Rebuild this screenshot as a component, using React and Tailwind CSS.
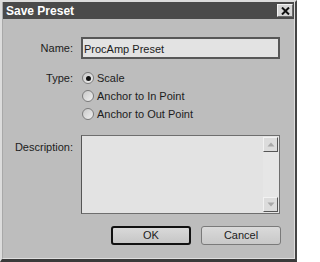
import React from "react";

function Radio({ checked }) {
  return (
    <span className="relative flex h-[12px] w-[12px] shrink-0 items-center justify-center rounded-full border border-[#7a7a7a] bg-gradient-to-br from-[#c8c8c8] to-[#f0f0f0]">
      {checked && <span className="h-[5px] w-[5px] rounded-full bg-[#111]" />}
    </span>
  );
}

function ScrollBtn({ up }) {
  return (
    <div className="flex h-[15px] w-full items-center justify-center border-r border-b border-[#555] border-t border-l border-t-[#f2f2f2] border-l-[#f2f2f2] bg-[#dcdcdc]">
      <svg width="8" height="5" viewBox="0 0 8 5">
        {up ? (
          <polygon points="4,0.5 7.5,4.5 0.5,4.5" fill="#a8a8a8" />
        ) : (
          <polygon points="0.5,0.5 7.5,0.5 4,4.5" fill="#a8a8a8" />
        )}
      </svg>
    </div>
  );
}

export default function App() {
  const font = { fontFamily: '"Liberation Sans", Arial, sans-serif' };
  return (
    <div
      className="h-[262px] w-[297px] border-l-[2px] border-t-[2px] border-r-[2px] border-b-[3px] border-l-[#dcdcdc] border-t-[#dcdcdc] border-r-[#454545] border-b-[#3a3a3a] bg-[#bdbdbd] text-[#1c1c1c]"
      style={font}
    >
      <div className="flex h-full flex-col border-r border-b border-r-[#dedede] border-b-[#dedede] border-l border-l-[#a8a8a8]">
        {/* Title bar */}
        <div className="flex h-[17px] shrink-0 items-center justify-between bg-[#4a4a4a] pl-[3px] pr-[1px]">
          <span className="text-[12px] font-bold leading-none text-white">Save Preset</span>
          <div className="flex h-[13px] w-[16px] items-center justify-center border border-t-[#f4f4f4] border-l-[#f4f4f4] border-r-[#6a6a6a] border-b-[#6a6a6a] bg-[#d6d6d6]">
            <svg width="9" height="8" viewBox="0 0 9 8">
              <path d="M1 0.5 L8 7.5 M8 0.5 L1 7.5" stroke="#111" strokeWidth="2" />
            </svg>
          </div>
        </div>

        {/* Body */}
        <div className="flex flex-1 flex-col pt-[18px] text-[11px]">
          {/* Name */}
          <div className="flex items-center">
            <span className="w-[70px] pr-0 text-right">Name:</span>
            <div className="ml-[8px] flex h-[22px] w-[199px] items-start border-2 border-[#575757] bg-[#e3e3e3] pl-[1px] pt-[2px] text-[11px]">
              ProcAmp Preset
            </div>
          </div>

          {/* Type */}
          <div className="mt-[10px] flex">
            <span className="w-[70px] pt-[2px] text-right leading-[14px]">Type:</span>
            <div className="ml-[8px] flex flex-col">
              {[
                ["Scale", true],
                ["Anchor to In Point", false],
                ["Anchor to Out Point", false],
              ].map(([label, c]) => (
                <div key={label} className="flex h-[18px] items-center gap-[3px] pl-[1px]">
                  <Radio checked={c} />
                  <span>{label}</span>
                </div>
              ))}
            </div>
          </div>

          {/* Description */}
          <div className="mt-[12px] flex">
            <span className="w-[70px] pt-[4px] text-right">Description:</span>
            <div className="ml-[8px] flex h-[79px] w-[199px] border border-[#6e6e6e] border-l-[#555] bg-[#e3e3e3]">
              <div className="flex-1" />
              <div className="flex w-[16px] flex-col justify-between bg-[#e6e6e6] py-[1px] pr-[1px]">
                <ScrollBtn up />
                <ScrollBtn />
              </div>
            </div>
          </div>

          {/* Buttons */}
          <div className="mt-[12px] flex gap-[10px] pl-[108px]">
            <button className="flex h-[19px] w-[80px] items-center justify-center rounded-[3px] border-2 border-[#111] bg-gradient-to-b from-[#d9d9d9] to-[#c6c6c6] text-[11px] leading-none">
              OK
            </button>
            <button className="flex h-[19px] w-[80px] items-center justify-center rounded-[3px] border border-[#7a7a7a] bg-gradient-to-b from-[#dadada] to-[#c8c8c8] text-[11px] leading-none">
              Cancel
            </button>
          </div>
        </div>
      </div>
    </div>
  );
}
